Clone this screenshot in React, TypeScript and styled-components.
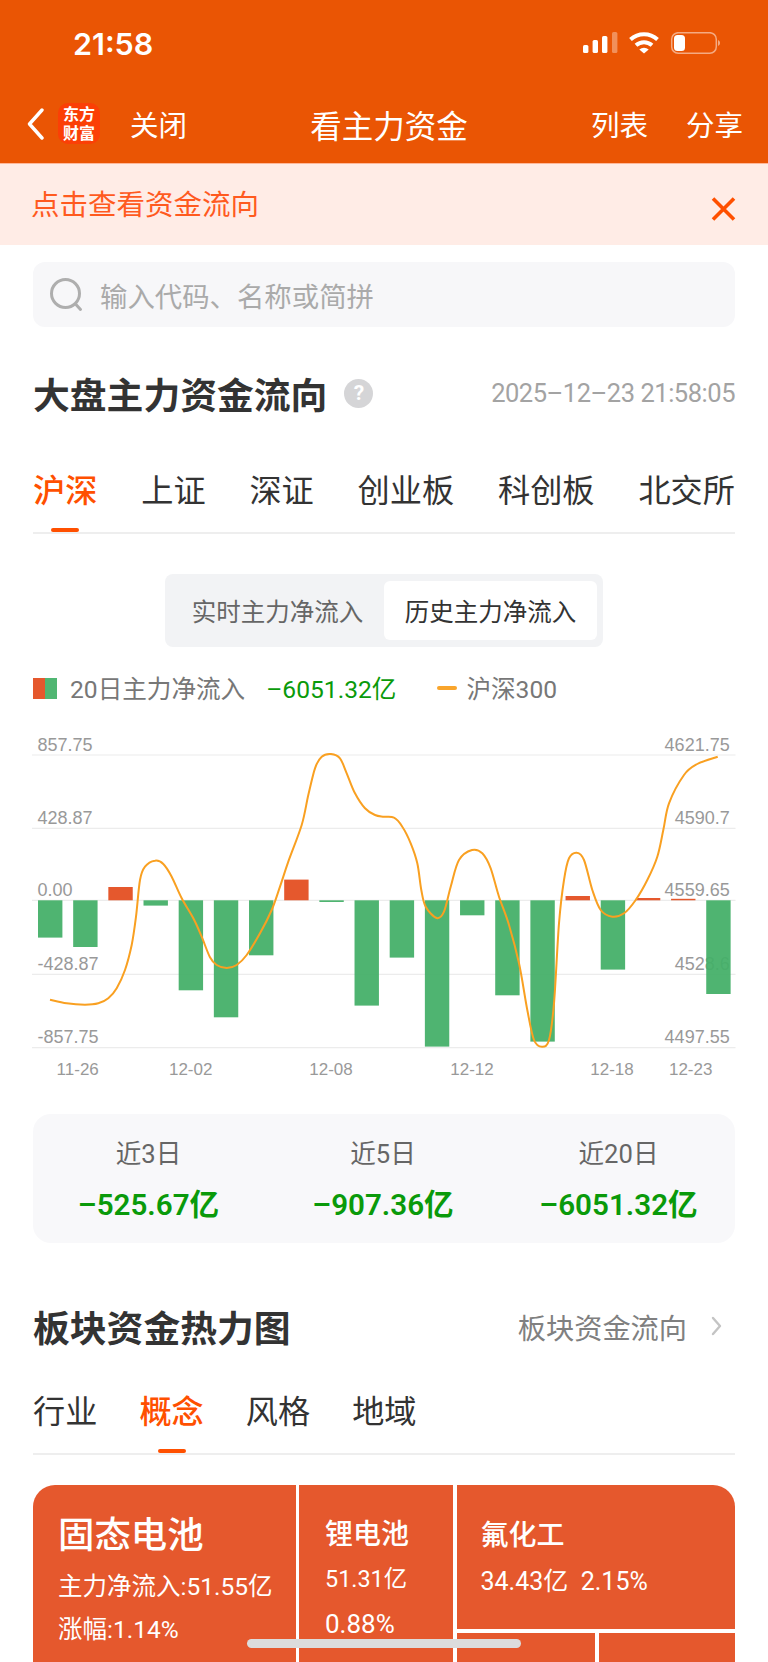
import styled, { createGlobalStyle } from 'styled-components';

const GlobalStyle = createGlobalStyle`
  html, body {
    margin: 0;
    padding: 0;
    background: #fff;
  }
  * {
    box-sizing: border-box;
  }
`;

const Page = styled.div`
  position: relative;
  width: 768px;
  height: 1662px;
  overflow: hidden;
  background: #fff;
  font-family: Roboto, 'Noto Sans CJK SC', sans-serif;
  color: #333;
`;

const Header = styled.header`
  background: #ea5504;
  color: #fff;
`;

const StatusBar = styled.div`
  height: 84px;
  display: flex;
  align-items: center;
  justify-content: space-between;
  padding: 0 47px 0 73px;
`;

const Clock = styled.span`
  font-family: Inter, sans-serif;
  font-size: 30.5px;
  font-weight: 600;
  margin-top: 2px;
`;

const StatusIcons = styled.svg`
  display: block;
  margin-top: 3px;
`;

const NavBar = styled.nav`
  height: 79px;
  display: flex;
  align-items: center;
  padding: 0 25px 0 27px;
  position: relative;
  font-size: 28.5px;
`;

const BackIcon = styled.svg`
  flex: none;
  margin-right: 14px;
`;

const Logo = styled.div`
  width: 42px;
  height: 41px;
  flex: none;
  border-radius: 10px;
  background: #fb3f06;
  font-size: 16px;
  font-weight: 700;
  line-height: 19px;
  text-align: center;
  padding-top: 2px;
  margin-right: 30px;
`;

const NavTitle = styled.div`
  flex: 1;
  text-align: center;
  font-size: 31.5px;
`;

const NavAction = styled.span`
  margin-left: 38px;
`;

const Banner = styled.div`
  height: 82px;
  background: #ffece6;
  border-top: 1px solid #ffb899;
  display: flex;
  align-items: center;
  justify-content: space-between;
  padding: 0 32px 0 31px;
  color: #ff5a1f;
  font-size: 28.5px;
  line-height: 40px;
`;

const BannerText = styled.span`
  margin-top: 3px;
`;

const CloseIcon = styled.svg`
  display: block;
  margin-top: 8px;
`;

const Content = styled.main`
  padding: 0 33px;
`;

const SearchBox = styled.div`
  height: 65px;
  margin-top: 17px;
  background: #f7f7f9;
  border-radius: 12px;
  display: flex;
  align-items: center;
  padding-left: 16px;
  gap: 16px;
  color: #aaa;
  font-size: 27.4px;
`;

const TitleRow = styled.div<{ $height: number; $top?: number }>`
  height: ${(p) => p.$height}px;
  margin-top: ${(p) => p.$top || 0}px;
  display: flex;
  align-items: center;
`;

const SectionTitle = styled.h2`
  margin: 0;
  font-size: 36.8px;
  font-weight: 600;
  color: #333;
`;

const HelpBadge = styled.span`
  width: 29px;
  height: 29px;
  margin-left: 17px;
  border-radius: 50%;
  background: #d5d5d7;
  color: #fff;
  font-size: 21px;
  font-weight: 700;
  line-height: 29px;
  text-align: center;
`;

const DateText = styled.span`
  margin-left: auto;
  font-size: 25.5px;
  color: #a3a3a3;
  letter-spacing: -0.47px;
`;

const TabRow = styled.div<{ $spread?: boolean; $top?: number }>`
  height: 73px;
  margin-top: ${(p) => p.$top || 0}px;
  padding-top: 7px;
  border-bottom: 2px solid #eeeeee;
  display: flex;
  justify-content: ${(p) => (p.$spread ? 'space-between' : 'flex-start')};
  gap: ${(p) => (p.$spread ? '0' : '42px')};
  font-size: 32.2px;
  line-height: 46px;
`;

const Tab = styled.span<{ $active?: boolean }>`
  position: relative;
  height: 64px;
  color: ${(p) => (p.$active ? '#ff5000' : '#333')};
  font-weight: ${(p) => (p.$active ? 500 : 400)};
  ${(p) =>
    p.$active &&
    `
    &::after {
      content: '';
      position: absolute;
      left: 50%;
      bottom: 0;
      width: 28px;
      height: 4px;
      margin-left: -14px;
      border-radius: 2px;
      background: #ff5000;
    }
  `}
`;

const ToggleWrap = styled.div`
  display: flex;
  justify-content: center;
  margin: 40px 0 0 0;
`;

const Toggle = styled.div`
  width: 438px;
  height: 73px;
  padding: 7px 6px;
  border-radius: 8px;
  background: #f2f3f5;
  display: flex;
  justify-content: flex-end;
  align-items: stretch;
`;

const ToggleItem = styled.span<{ $active?: boolean }>`
  width: 213px;
  display: flex;
  align-items: center;
  justify-content: center;
  border-radius: 6px;
  background: ${(p) => (p.$active ? '#fff' : 'transparent')};
  color: ${(p) => (p.$active ? '#333' : '#666')};
  font-size: 24.5px;
`;

const Legend = styled.div`
  height: 24px;
  margin-top: 28px;
  margin-bottom: 2px;
  display: flex;
  align-items: center;
  font-size: 24.6px;
  color: #777;
`;

const LegendSwatch = styled.span`
  width: 24px;
  height: 21px;
  margin: 2px 13px 0 0;
  background: linear-gradient(90deg, #e5582d 50%, #50b672 50%);
`;

const LegendValue = styled.span`
  color: #0a9a0a;
  margin-left: 21px;
`;

const LegendLine = styled.span`
  width: 20px;
  height: 4px;
  margin: 2px 9px 0 41px;
  border-radius: 2px;
  background: #f9a52c;
`;

const ChartSvg = styled.svg`
  display: block;
  overflow: visible;
`;

const Summary = styled.div`
  height: 129px;
  margin-top: 33px;
  border-radius: 18px;
  background: #f8f8fa;
  display: grid;
  grid-template-columns: 231px 238px 233px;
  text-align: center;
  padding-top: 22px;
`;

const SummaryLabel = styled.div`
  font-size: 25.6px;
  line-height: 36px;
  color: #666;
`;

const SummaryValue = styled.div`
  margin-top: 13px;
  font-size: 29.6px;
  line-height: 40px;
  font-weight: 600;
  color: #0a9a0a;
`;

const MoreLink = styled.span`
  margin-left: auto;
  display: flex;
  align-items: center;
  font-size: 28.2px;
  color: #808080;
  padding-right: 13px;
  gap: 24px;
`;

const Treemap = styled.div`
  height: 300px;
  margin-top: 30px;
  border-radius: 22px 22px 0 0;
  overflow: hidden;
  display: flex;
  gap: 3.5px;
  color: #fff;
`;

const Cell = styled.div<{ $width?: number; $height?: number; $pad?: string; $grow?: boolean }>`
  background: #e5582d;
  padding: ${(p) => p.$pad || '0'};
  width: ${(p) => (p.$width ? `${p.$width}px` : 'auto')};
  height: ${(p) => (p.$height ? `${p.$height}px` : 'auto')};
  flex: ${(p) => (p.$grow ? '1' : 'none')};
`;

const TreeColumn = styled.div`
  flex: 1;
  display: flex;
  flex-direction: column;
  gap: 4px;
`;

const TreeRow = styled.div`
  flex: 1;
  display: flex;
  gap: 3.5px;
`;

const CellName = styled.div<{ $size: number; $height: number }>`
  font-size: ${(p) => p.$size}px;
  line-height: ${(p) => p.$height}px;
  font-weight: 500;
`;

const CellLine = styled.div<{ $height: number; $top?: number; $size?: number }>`
  font-size: ${(p) => p.$size || 24.5}px;
  line-height: ${(p) => p.$height}px;
  margin-top: ${(p) => p.$top || 0}px;
  white-space: pre;
`;

const HomeIndicator = styled.div`
  position: absolute;
  left: 247px;
  top: 1639px;
  width: 274px;
  height: 9px;
  border-radius: 5px;
  background: #dcdcdc;
`;

const bars = [
  -37.3, -46.7, 13.3, -5.3, -90, -117, -55, 20.7, -1.7, -105.3, -57.3, -146.3, -15, -95, -141.3, 4.3, -69.3, 2.3,
  1.5, -93.7,
];

// traced from the reference at 3x, x / 3 and 710 + y / 3 give the page position
const trace = [
  [150, 869], [200, 880], [255, 884], [295, 880], [325, 865], [350, 835], [375, 780], [395, 705], [408, 620],
  [420, 510], [435, 470], [465, 452], [490, 462], [515, 500], [545, 565], [580, 625], [605, 680], [630, 742],
  [650, 765], [680, 774], [710, 765], [740, 735], [780, 670], [815, 600], [840, 530], [865, 455], [905, 345],
  [925, 255], [945, 175], [965, 140], [993, 132], [1020, 145], [1040, 190], [1065, 250], [1095, 295], [1125, 315],
  [1152, 320], [1182, 323], [1207, 350], [1232, 400], [1252, 460], [1264, 540], [1277, 590], [1310, 624],
  [1332, 605], [1352, 530], [1377, 450], [1416, 420], [1447, 430], [1472, 475], [1497, 560], [1527, 645],
  [1557, 760], [1582, 900], [1602, 990], [1626, 1010], [1647, 990], [1662, 880], [1677, 640], [1692, 510],
  [1707, 445], [1731, 428], [1752, 450], [1777, 540], [1802, 600], [1837, 620], [1872, 610], [1907, 570],
  [1942, 510], [1972, 440], [1990, 360], [2007, 280], [2052, 195], [2092, 162], [2153, 140],
].map(([x, y]) => [x / 3, 710 + y / 3]);

function smoothPath(pts: number[][]) {
  let d = `M${pts[0][0].toFixed(1)} ${pts[0][1].toFixed(1)}`;
  for (let i = 0; i < pts.length - 1; i++) {
    const p0 = pts[Math.max(i - 1, 0)];
    const p1 = pts[i];
    const p2 = pts[i + 1];
    const p3 = pts[Math.min(i + 2, pts.length - 1)];
    const c1x = p1[0] + (p2[0] - p0[0]) / 6;
    const c1y = p1[1] + (p2[1] - p0[1]) / 6;
    const c2x = p2[0] - (p3[0] - p1[0]) / 6;
    const c2y = p2[1] - (p3[1] - p1[1]) / 6;
    d += `C${c1x.toFixed(1)} ${c1y.toFixed(1)} ${c2x.toFixed(1)} ${c2y.toFixed(1)} ${p2[0].toFixed(1)} ${p2[1].toFixed(1)}`;
  }
  return d;
}

const grid = [755, 828.3, 900.3, 974.3, 1047.7];
const leftLabels = ['857.75', '428.87', '0.00', '-428.87', '-857.75'];
const rightLabels = ['4621.75', '4590.7', '4559.65', '4528.6', '4497.55'];
const dates = [
  ['11-26', 77.7],
  ['12-02', 190.7],
  ['12-08', 331],
  ['12-12', 472],
  ['12-18', 612],
  ['12-23', 690.7],
] as const;

function Chart() {
  return (
    <ChartSvg width={702} height={380} viewBox="33 701 702 380">
      {grid.map((y) => (
        <line key={y} x1={32} x2={735.5} y1={y} y2={y} stroke="#ececec" strokeWidth={1.2} />
      ))}
      <g fontFamily="'Liberation Sans', sans-serif" fontSize={18} fill="#999">
        {leftLabels.map((t, i) => (
          <text key={t} x={37.5} y={grid[i] - 4.5}>
            {t}
          </text>
        ))}
        {rightLabels.map((t, i) => (
          <text key={t} x={729.7} y={grid[i] - 4.5} textAnchor="end">
            {t}
          </text>
        ))}
        {dates.map(([t, x]) => (
          <text key={t} x={x} y={1075} textAnchor="middle" fontSize={17}>
            {t}
          </text>
        ))}
      </g>
      {bars.map((v, i) => (
        <rect
          key={i}
          x={38 + i * 35.17}
          y={v > 0 ? 900.3 - v : 900.3}
          width={24.4}
          height={Math.abs(v)}
          fill={v > 0 ? '#e5582d' : '#44af68'}
          fillOpacity={v > 0 ? 1 : 0.94}
        />
      ))}
      <path d={smoothPath(trace)} fill="none" stroke="#f9a021" strokeWidth={2} />
    </ChartSvg>
  );
}

function App() {
  return (
    <Page>
      <GlobalStyle />
      <Header>
        <StatusBar>
          <Clock>21:58</Clock>
          <StatusIcons width={138} height={24} viewBox="0 0 138 24" fill="#fff">
            <rect x="0" y="13" width="5.4" height="8" rx="1.6" />
            <rect x="9.6" y="8" width="5.4" height="13" rx="1.6" />
            <rect x="19" y="4" width="5.4" height="17" rx="1.6" />
            <rect x="29" y="0" width="5.4" height="21" rx="1.6" fillOpacity="0.35" />
            <g fill="none" stroke="#fff" strokeWidth="4">
              <path d="M47.5 7.5a20 20 0 0 1 27 0" />
              <path d="M53 13.2a12 12 0 0 1 16 0" />
            </g>
            <path d="M56.3 17.5a7 7 0 0 1 9.4 0L61 21.5z" />
            <rect x="88.7" y="0.7" width="44.6" height="20.6" rx="6.5" fill="none" stroke="#fff" strokeOpacity="0.5" strokeWidth="1.5" />
            <rect x="91" y="3" width="11" height="16" rx="3.5" />
            <path d="M135 8a3.2 3.2 0 0 1 0 6z" fillOpacity="0.5" />
          </StatusIcons>
        </StatusBar>
        <NavBar>
          <BackIcon width={17} height={32} viewBox="0 0 17 32">
            <path d="M15 2L2.5 16 15 30" fill="none" stroke="#fff" strokeWidth="3.4" strokeLinecap="round" strokeLinejoin="round" />
          </BackIcon>
          <Logo>
            东方
            <br />
            财富
          </Logo>
          <span>关闭</span>
          <NavTitle>看主力资金</NavTitle>
          <span>列表</span>
          <NavAction>分享</NavAction>
        </NavBar>
      </Header>
      <Banner>
        <BannerText>点击查看资金流向</BannerText>
        <CloseIcon width={25} height={24} viewBox="0 0 25 24">
          <path d="M2 1.5L23 22.5M23 1.5L2 22.5" fill="none" stroke="#ff5000" strokeWidth="3.6" />
        </CloseIcon>
      </Banner>
      <Content>
        <SearchBox>
          <svg width={35} height={34} viewBox="0 0 35 34">
            <circle cx="16.5" cy="15.5" r="14" fill="none" stroke="#aeaeae" strokeWidth="3" />
            <path d="M26.5 26l5 5.5" stroke="#aeaeae" strokeWidth="3" strokeLinecap="round" />
          </svg>
          <span>输入代码、名称或简拼</span>
        </SearchBox>
        <TitleRow $height={132}>
          <SectionTitle>大盘主力资金流向</SectionTitle>
          <HelpBadge>?</HelpBadge>
          <DateText>2025–12–23 21:58:05</DateText>
        </TitleRow>
        <TabRow $spread $top={2}>
          <Tab $active>沪深</Tab>
          <Tab>上证</Tab>
          <Tab>深证</Tab>
          <Tab>创业板</Tab>
          <Tab>科创板</Tab>
          <Tab>北交所</Tab>
        </TabRow>
        <ToggleWrap>
          <Toggle>
            <ToggleItem>实时主力净流入</ToggleItem>
            <ToggleItem $active>历史主力净流入</ToggleItem>
          </Toggle>
        </ToggleWrap>
        <Legend>
          <LegendSwatch />
          <span>20日主力净流入</span>
          <LegendValue>–6051.32亿</LegendValue>
          <LegendLine />
          <span>沪深300</span>
        </Legend>
        <Chart />
        <Summary>
          <div>
            <SummaryLabel>近3日</SummaryLabel>
            <SummaryValue>–525.67亿</SummaryValue>
          </div>
          <div>
            <SummaryLabel>近5日</SummaryLabel>
            <SummaryValue>–907.36亿</SummaryValue>
          </div>
          <div>
            <SummaryLabel>近20日</SummaryLabel>
            <SummaryValue>–6051.32亿</SummaryValue>
          </div>
        </Summary>
        <TitleRow $height={60} $top={53}>
          <SectionTitle>板块资金热力图</SectionTitle>
          <MoreLink>
            板块资金流向
            <svg width={11} height={20} viewBox="0 0 11 20">
              <path d="M2 2l7 8-7 8" fill="none" stroke="#c4c4c4" strokeWidth="2.4" strokeLinecap="round" strokeLinejoin="round" />
            </svg>
          </MoreLink>
        </TitleRow>
        <TabRow $top={26}>
          <Tab>行业</Tab>
          <Tab $active>概念</Tab>
          <Tab>风格</Tab>
          <Tab>地域</Tab>
        </TabRow>
        <Treemap>
          <Cell $width={262.5} $pad="29px 0 0 25px">
            <CellName $size={36.4} $height={44}>
              固态电池
            </CellName>
            <CellLine $height={43} $top={7}>
              主力净流入:51.55亿
            </CellLine>
            <CellLine $height={43}>涨幅:1.14%</CellLine>
          </Cell>
          <Cell $width={154} $pad="30px 0 0 26px">
            <CellName $size={28} $height={40}>
              锂电池
            </CellName>
            <CellLine $height={45} $top={2} $size={23.4}>
              51.31亿
            </CellLine>
            <CellLine $height={45} $size={26}>
              0.88%
            </CellLine>
          </Cell>
          <TreeColumn>
            <Cell $height={144} $pad="31px 0 0 24px">
              <CellName $size={28} $height={40}>
                氟化工
              </CellName>
              <CellLine $height={44} $top={4} $size={25}>
                {'34.43亿  2.15%'}
              </CellLine>
            </Cell>
            <TreeRow>
              <Cell $width={138.5} />
              <Cell $grow />
            </TreeRow>
          </TreeColumn>
        </Treemap>
      </Content>
      <HomeIndicator />
    </Page>
  );
}

export default App;
